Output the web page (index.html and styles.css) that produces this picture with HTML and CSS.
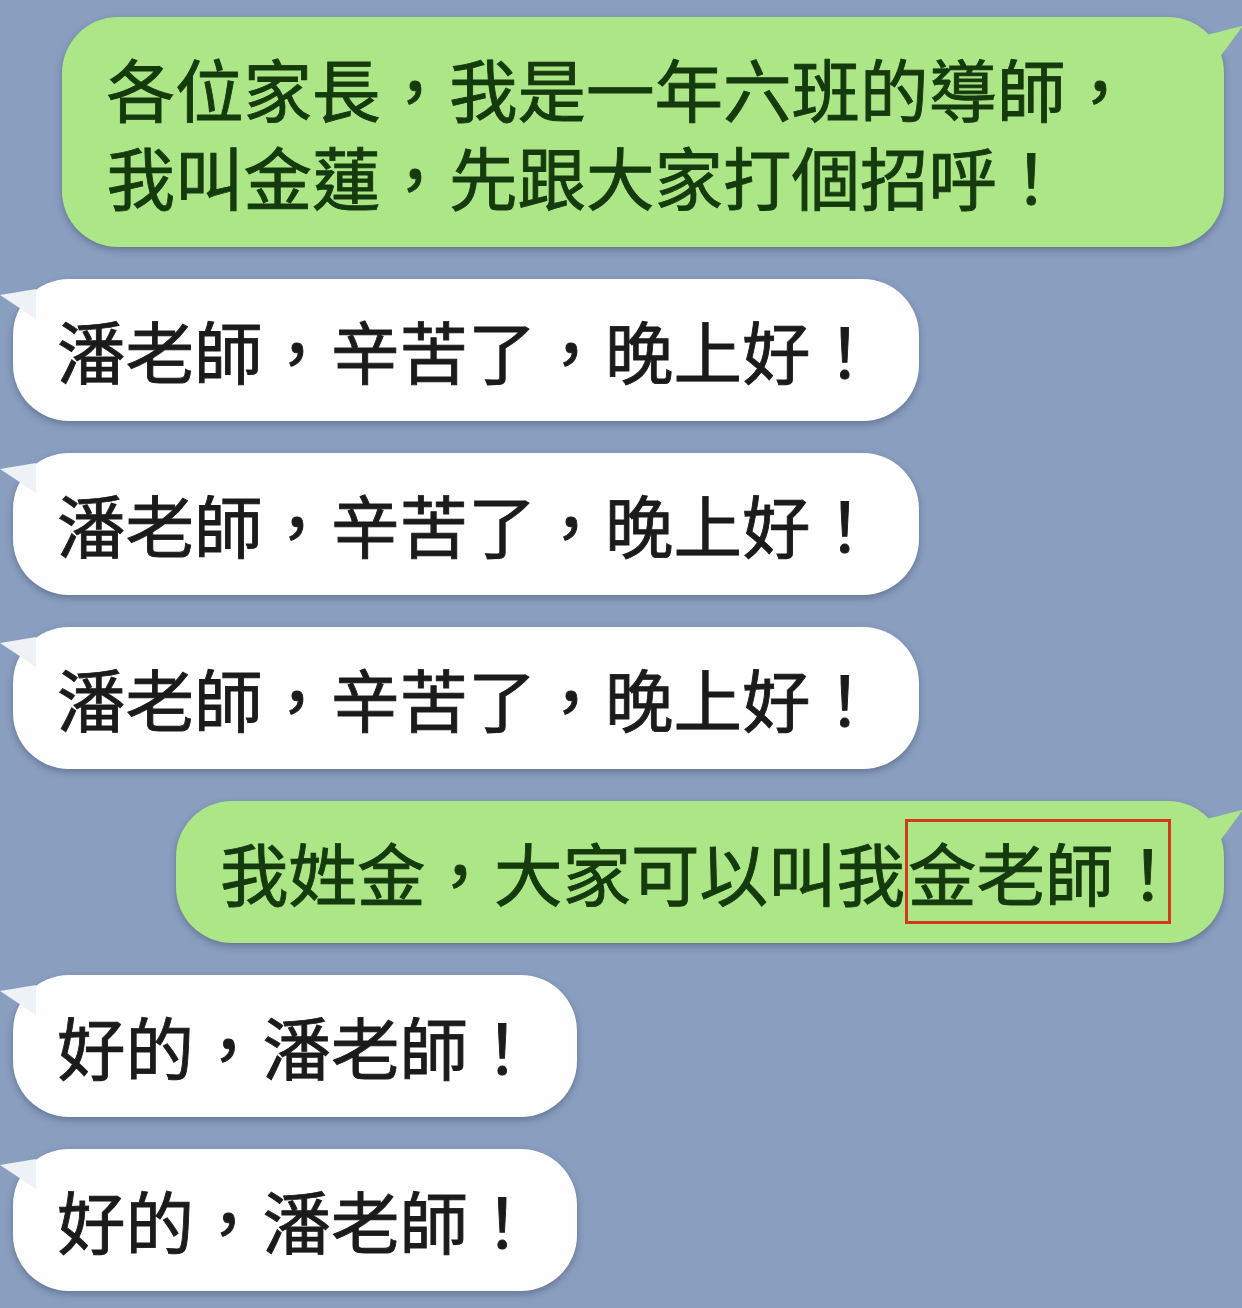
FILE: index.html
```html
<!DOCTYPE html>
<html lang="zh-Hant">
<head>
  <meta charset="UTF-8">
  <meta name="viewport" content="width=device-width, initial-scale=1.0">
  <title>一年六班家長群</title>
  <link rel="stylesheet" href="styles.css">
</head>
<body>
  <div class="chat">
    <div class="msg me wide">各位家長，我是一年六班的導師，<br>我叫金蓮，先跟大家打個招呼！</div>
    <div class="msg them">潘老師，辛苦了，晚上好！</div>
    <div class="msg them">潘老師，辛苦了，晚上好！</div>
    <div class="msg them">潘老師，辛苦了，晚上好！</div>
    <div class="msg me">我姓金，大家可以叫我<span class="mark">金老師<span class="last">！</span></span></div>
    <div class="msg them">好的，潘老師！</div>
    <div class="msg them">好的，潘老師！</div>
  </div>
</body>
</html>
```

FILE: styles.css
```css
body {
  margin: 0;
  background: #8a9ec0;
  font-family: "Noto Sans CJK TC", "Noto Sans CJK SC", sans-serif;
}
.chat {
  display: flex;
  flex-direction: column;
  gap: 32px;
  padding: 17px 0 20px;
}
.msg {
  position: relative;
  padding: 27px 40px 27px 44px;
  border-radius: 56px;
  font-size: 68.5px;
  font-weight: 400;
  line-height: 88px;
  white-space: nowrap;
  -webkit-text-stroke: 0.9px currentColor;
  box-shadow: 0 3px 7px rgba(55, 68, 95, 0.45);
}
/* own messages, right side */
.me {
  align-self: flex-end;
  margin-right: 18px;
  background: #ade687;
  color: #143a0e;
}
.me.wide {
  padding-right: 90px;
}
.me::before {
  content: "";
  position: absolute;
  right: -19px;
  top: 6px;
  width: 42px;
  height: 34px;
  background: #ade687;
  clip-path: polygon(0 40%, 100% 8%, 45% 100%);
}
/* replies, left side */
.them {
  align-self: flex-start;
  margin-left: 13px;
  background: #fefefe;
  color: #1b1b1b;
}
.them::before {
  content: "";
  position: absolute;
  left: -13px;
  top: 10px;
  width: 36px;
  height: 30px;
  background: #eef1f5;
  clip-path: polygon(0 20%, 100% 0, 100% 100%);
}
.mark {
  border: 3px solid #d23a1e;
  margin-right: 13px;
}
.last {
  letter-spacing: -14px;
}
```
